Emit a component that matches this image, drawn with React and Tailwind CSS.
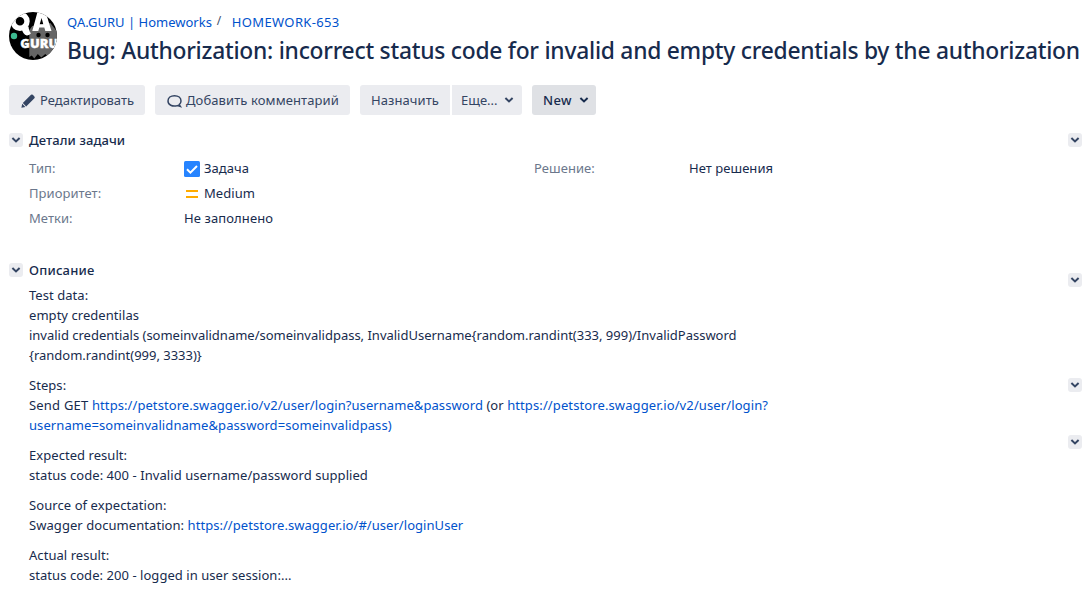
function Chevron({ className = "" }) {
  return (
    <svg viewBox="0 0 10 8" className={`h-2 w-2.5 ${className}`} fill="none" stroke="currentColor" strokeWidth="2">
      <path d="M1.4 2.1 5 5.4 8.6 2.1" />
    </svg>
  );
}

function Toggle({ className = "" }) {
  return (
    <button className={`flex size-[14px] shrink-0 items-center justify-center rounded-[3px] bg-[#ebecf0] text-[#344563] ${className}`}>
      <Chevron />
    </button>
  );
}

function Logo() {
  return (
    <svg viewBox="0 0 48 48" className="size-12 shrink-0">
      <defs>
        <clipPath id="avatar">
          <circle cx="24" cy="24" r="24" />
        </clipPath>
      </defs>
      <g clipPath="url(#avatar)">
        <rect width="48" height="48" fill="#000" />
        <path d="M20.3 45V18l3-4 18-3 7 9v26l-9-1-3-3-4 3.5-3.5-3.5-3.5 4.5-2.5-3z" fill="#666" />
        <circle cx="29.5" cy="23" r="2.2" fill="#000" />
        <circle cx="38.5" cy="23" r="2.2" fill="#000" />
        <circle cx="11" cy="9.3" r="7" fill="none" stroke="#fff" strokeWidth="5.4" />
        <path d="M12.5 16 19.5 14.5Q20 19.5 22 21.3 20.5 23.6 17.8 23.4 14 23 12.5 16z" fill="#fff" />
        <path d="M23.3 19 29-2h7l6.5 21h-6.2l-1-3.4h-5l-1 3.4zM30.7 12.3h3.6L32.6 6z" fill="#fff" fillRule="evenodd" />
        <circle cx="5" cy="24" r="3.2" fill="#3dbb91" />
        <text x="11.3" y="36.4" fill="#fff" stroke="#fff" strokeWidth="0.3" fontSize="12.3" fontWeight="800" fontFamily="Open Sans, sans-serif" textLength="38" lengthAdjust="spacingAndGlyphs">GURU</text>
      </g>
    </svg>
  );
}

function Field({ label, children }) {
  return (
    <div className="flex h-[25px] items-center">
      <dt className="w-[155px] text-[#6b778c]">{label}</dt>
      <dd className="flex items-center gap-1">{children}</dd>
    </div>
  );
}

function Link({ children, className = "" }) {
  return <a className={`text-[#0052cc] ${className}`}>{children}</a>;
}

export default function App() {
  return (
    <div className="h-[591px] w-[1088px] overflow-hidden bg-white font-['Noto_Sans','Open_Sans',sans-serif] text-[13px] leading-5 tracking-[0.05px] text-[#172b4d]">
      <header className="flex gap-2.5 pt-3 pl-[9px]">
        <Logo />
        <div className="whitespace-nowrap">
          <nav className="flex h-5 tracking-normal">
            <Link>QA.GURU | Homeworks</Link>
            <span className="-mt-px ml-[5px] w-[15px] text-[12px] text-[#42526e]">/</span>
            <Link className="tracking-[0.35px]">HOMEWORK-653</Link>
          </nav>
          <h1 className="mt-[5px] text-[22.8px] leading-7 font-medium tracking-[-0.245px]">
            Bug: Authorization: incorrect status code for invalid and empty credentials by the authorization
          </h1>
        </div>
      </header>

      <div className="mt-5 flex h-[30px] pl-[9px] tracking-normal text-[#344563]">
        <button className="flex w-[136px] items-center rounded-[3px] bg-[#ebecf0] pl-[11px]">
          <svg viewBox="0 0 16 16" className="mt-0.5 mr-1 size-4 fill-[#344563]">
            <path d="M11 1.8q.9-.8 1.8 0l1.6 1.6q.8.9 0 1.8L6.2 13.4 2.8 10zM2.2 10.8 5.4 14 1.4 14.8z" />
          </svg>
          Редактировать
        </button>
        <button className="ml-2.5 flex w-[195px] items-center rounded-[3px] bg-[#ebecf0] pl-3 tracking-[0.1px]">
          <svg viewBox="0 0 16 16" className="mt-px mr-[3px] size-4" fill="none" stroke="#344563" strokeWidth="1.5">
            <path d="M10.5 12.6C5.2 14.2 1 11.7 1 7.9 1 4.9 3.7 2.7 7.5 2.7S14 4.9 14 7.9c0 1.6-.7 2.8-1.8 3.7l1.2 1.9z" />
          </svg>
          Добавить комментарий
        </button>
        <button className="ml-2.5 flex w-[90px] items-center rounded-l-[3px] bg-[#ebecf0] pl-[11px] tracking-[0.08px]">Назначить</button>
        <button className="ml-0.5 flex w-[70px] items-center rounded-r-[3px] bg-[#ebecf0] pl-[9px]">
          Еще...
          <Chevron className="ml-[6px]" />
        </button>
        <button className="ml-2.5 flex w-16 items-center rounded-[3px] bg-[#dfe1e5] pl-[11px] font-medium tracking-[0.4px] text-[#172b4d]">
          New
          <Chevron className="ml-[7px]" />
        </button>
      </div>

      <div className="flex">
        <main className="w-[1068px] pl-[9px]">
          <section className="pt-[15px]">
            <div className="flex h-5 items-center gap-1.5">
              <Toggle />
              <h2 className="font-medium tracking-[0.08px]">Детали задачи</h2>
            </div>
            <div className="mt-[5px] flex pl-5">
              <dl className="w-[505px]">
                <Field label="Тип:">
                  <svg viewBox="0 0 16 16" className="mt-0.5 size-4">
                    <rect width="16" height="16" rx="1.5" fill="#2684ff" />
                    <path d="M3 8.3 6.4 11.6 13 5" fill="none" stroke="#fff" strokeWidth="2" />
                  </svg>
                  Задача
                </Field>
                <Field label="Приоритет:">
                  <svg viewBox="0 0 16 16" className="mt-0.5 size-4 fill-[#ffab00]">
                    <path d="M2 4h12v2H2zM2 10h12v2H2z" />
                  </svg>
                  Medium
                </Field>
                <Field label="Метки:">
                  <span className="tracking-[0.1px]">Не заполнено</span>
                </Field>
              </dl>
              <dl>
                <Field label="Решение:">Нет решения</Field>
              </dl>
            </div>
          </section>

          <section className="mt-[30px]">
            <div className="flex h-5 items-center gap-1.5">
              <Toggle />
              <h2 className="font-medium tracking-[0.2px]">Описание</h2>
            </div>
            <div className="mt-[5px] flex flex-col gap-2.5 pl-5 whitespace-nowrap">
              <p>
                Test data:<br />
                empty credentilas<br />
                <span className="tracking-[-0.01px]">
                  invalid credentials (someinvalidname/someinvalidpass, InvalidUsername{"{"}random.randint(333, 999)/InvalidPassword<br />
                  {"{"}random.randint(999, 3333){"}"}
                </span>
              </p>
              <p>
                Steps:<br />
                <span className="tracking-[0.2px]">Send GET </span>
                <Link className="tracking-[0.075px]">https://petstore.swagger.io/v2/user/login?username&amp;password</Link>
                {" (or "}
                <Link className="tracking-[0.11px]">https://petstore.swagger.io/v2/user/login?</Link>
                <br />
                <Link className="tracking-[0.08px]">username=someinvalidname&amp;password=someinvalidpass)</Link>
              </p>
              <p>
                Expected result:<br />
                <span className="tracking-[0.06px]">status code: 400 - Invalid username/password supplied</span>
              </p>
              <p>
                <span className="tracking-[0.08px]">Source of expectation:</span><br />
                <span className="tracking-[0.06px]">Swagger documentation: </span>
                <Link>https://petstore.swagger.io/#/user/loginUser</Link>
              </p>
              <p>
                Actual result:<br />
                status code: 200 - logged in user session:...
              </p>
            </div>
          </section>
        </main>

        <aside className="flex flex-col">
          <Toggle className="mt-[18px]" />
          <Toggle className="mt-[126px]" />
          <Toggle className="mt-[91px]" />
          <Toggle className="mt-[43px]" />
        </aside>
      </div>
    </div>
  );
}
